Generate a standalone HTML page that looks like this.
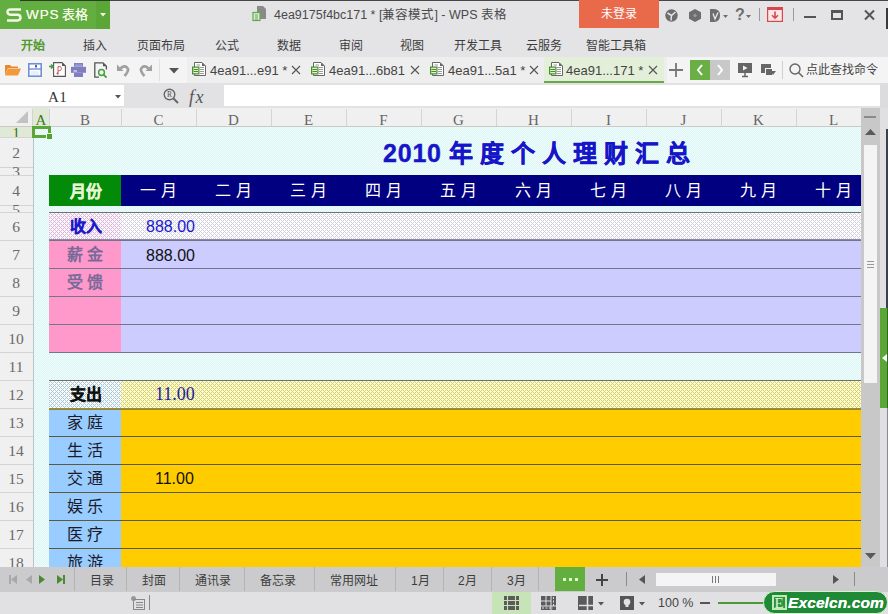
<!DOCTYPE html><html lang="zh-CN"><head><meta charset="utf-8"><style>
*{margin:0;padding:0;box-sizing:border-box}
html,body{width:888px;height:614px;overflow:hidden;background:#e3e3e5;font-family:"Liberation Sans",sans-serif;position:relative}
.a{position:absolute}
.t{position:absolute;white-space:nowrap;line-height:1}
svg{position:absolute;overflow:visible}
.mi{font-size:12px;color:#3c3c3c;top:40px}
.ch{position:absolute;font-family:"Liberation Serif",serif;font-size:15px;color:#666;top:112px;height:16px;line-height:16px;text-align:center}
.rh{position:absolute;font-family:"Liberation Serif",serif;font-size:14px;color:#6a6a6a;left:0;width:32px;text-align:center;line-height:1}
.tab{font-size:12px;color:#3c3c3c;top:575px}
</style></head><body>
<div class="a" style="left:0;top:0;width:888px;height:29px;background:#e4e4e6"></div>
<div class="a" style="left:0;top:0;width:110px;height:29px;background:#63ae40"></div>
<div class="a" style="left:96px;top:1px;width:14px;height:28px;background:#5aa637"></div>
<div class="a" style="left:20px;top:0;width:868px;height:1px;background:rgba(30,30,30,.8)"></div>
<svg style="left:6px;top:8px" width="16" height="14" viewBox="0 0 16 14"><path d="M15 1.5H4.5Q1.5 1.5 1.5 4T4.5 6.8H11.5Q14.5 6.8 14.5 9.6T11.5 12.5H1" fill="none" stroke="#f4f9e6" stroke-width="2.4"/></svg>
<div class="t" style="left:26px;top:8px;font-size:13.5px;color:#f4f9e6;text-shadow:0 0 0.4px #f4f9e6"><span style="letter-spacing:0.9px">WP</span>S<span style="font-size:13px;margin-left:3px">表格</span></div>
<svg style="left:100px;top:13px" width="6" height="4"><path d="M0 0H6L3 3.5Z" fill="#f4f9e6"/></svg>
<svg style="left:252px;top:6px" width="16" height="16" viewBox="0 0 16 16"><path d="M5 0H11L14 3V13H5Z" fill="#8a8a8a"/><rect x="1" y="6.5" width="7" height="8" fill="#e4e4e6" stroke="#5cae3c" stroke-width="1.2"/><path d="M3 9H6M3 11H6M3 13H6" stroke="#5cae3c" stroke-width="1"/></svg>
<div class="t" style="left:274px;top:9px;font-size:12.5px;color:#4a4a4a">4ea9175f4bc171 * [兼容模式] - WPS 表格</div>
<div class="a" style="left:579px;top:0;width:80px;height:28px;background:#e96a4b"></div>
<div class="t" style="left:601px;top:8px;font-size:12px;color:#fff">未登录</div>
<svg style="left:665px;top:9px" width="13" height="13" viewBox="0 0 13 13"><circle cx="6.5" cy="6.5" r="6.2" fill="#6d6d6d"/><path d="M2.5 4L6.5 6.5L10.5 3M6.5 6.5L6 11.5" stroke="#e4e4e6" stroke-width="1.5" fill="none"/></svg>
<svg style="left:689px;top:9px" width="12" height="13" viewBox="0 0 12 13"><path d="M6 0L12 3.2V9.8L6 13L0 9.8V3.2Z" fill="#6d6d6d"/><path d="M6 4.5L8 6.5L6 8.5L4 6.5Z" fill="#9a9a9a"/></svg>
<svg style="left:710px;top:9px" width="20" height="13" viewBox="0 0 20 13"><path d="M0 0H4Q10 0 10 6.5T4 13H0Z" fill="#6d6d6d"/><path d="M3 4.5L5 10L8 3.5" stroke="#e4e4e6" stroke-width="1.4" fill="none"/><path d="M13 6H18L15.5 9Z" fill="#6d6d6d"/></svg>
<div class="t" style="left:735px;top:7px;font-size:16px;font-weight:bold;color:#6d6d6d">?</div>
<svg style="left:746px;top:15px" width="6" height="4"><path d="M0 0H5L2.5 3Z" fill="#6d6d6d"/></svg>
<div class="a" style="left:759px;top:8px;width:1px;height:13px;background:#9a9a9a"></div>
<svg style="left:767px;top:7px" width="16" height="15" viewBox="0 0 16 15"><rect x="0.6" y="0.6" width="14.8" height="13.8" fill="#fbe7e7" stroke="#d9474a" stroke-width="1.2"/><rect x="0" y="0" width="16" height="3" fill="#d9474a"/><path d="M8 4.5V11M5 8.2L8 11.2L11 8.2" stroke="#d9474a" stroke-width="1.6" fill="none"/></svg>
<div class="a" style="left:793px;top:8px;width:1px;height:13px;background:#9a9a9a"></div>
<div class="a" style="left:804px;top:16px;width:12px;height:2px;background:#555"></div>
<div class="a" style="left:831px;top:10px;width:12px;height:10px;border:2px solid #555;border-top-width:3px"></div>
<svg style="left:864px;top:10px" width="11" height="10" viewBox="0 0 11 10"><path d="M1 0.5L10 9.5M10 0.5L1 9.5" stroke="#555" stroke-width="2"/></svg>
<div class="a" style="left:886px;top:8px;width:2px;height:21px;background:#3a3a3a"></div>
<div class="a" style="left:0;top:29px;width:888px;height:28px;background:#e4e4e6"></div>
<div class="t mi" style="left:21px;color:#4e9a2a;font-weight:bold">开始</div>
<div class="t mi" style="left:83px">插入</div>
<div class="t mi" style="left:137px">页面布局</div>
<div class="t mi" style="left:215px">公式</div>
<div class="t mi" style="left:277px">数据</div>
<div class="t mi" style="left:339px">审阅</div>
<div class="t mi" style="left:400px">视图</div>
<div class="t mi" style="left:454px">开发工具</div>
<div class="t mi" style="left:526px">云服务</div>
<div class="t mi" style="left:586px">智能工具箱</div>
<div class="a" style="left:0;top:57px;width:888px;height:26px;background:#f4f4f4"></div>
<div class="a" style="left:187px;top:57px;width:480px;height:26px;background:#eeeeee"></div>
<svg style="left:5px;top:64px" width="16" height="12" viewBox="0 0 16 12"><path d="M0 1H5L6.5 2.5H13V4H3L0 11Z" fill="#e9892f"/><path d="M3 4.5H16L13 11.5H0Z" fill="#f29a3a"/></svg>
<svg style="left:28px;top:63px" width="14" height="14" viewBox="0 0 14 14"><rect x="0.8" y="0.8" width="12.4" height="12.4" fill="#fff" stroke="#7090dc" stroke-width="1.6"/><path d="M1 6H13" stroke="#7090dc" stroke-width="1.4"/><rect x="7" y="2" width="2" height="2.5" fill="#4a62b0"/><path d="M3 9H11M3 11H11" stroke="#d6e0f6" stroke-width="1"/></svg>
<svg style="left:49px;top:62px" width="17" height="15" viewBox="0 0 17 15"><path d="M4.6 0.6H13L16.4 4V14.4H4.6Z" fill="#fff" stroke="#555" stroke-width="1.1"/><path d="M13 0.6V4H16.4Z" fill="#555"/><path d="M8.5 12.5Q7 10.5 8.5 10.5Q9.5 10.5 9 12.5M9 12V4.5Q12.5 4 12.5 6.5T9 9" stroke="#cc4a50" stroke-width="0.9" fill="none"/><path d="M0 4.5H3M2 2.5L4 4.5L2 6.5" stroke="#4a9a40" stroke-width="1.5" fill="none"/></svg>
<svg style="left:71px;top:63px" width="15" height="14" viewBox="0 0 15 14"><rect x="3" y="0" width="9" height="3.6" fill="#7e7ec0"/><path d="M4 1.3H11M4 2.5H11" stroke="#a8a8d8" stroke-width="0.6"/><rect x="0" y="3.8" width="15" height="6" fill="#7e7ec0"/><path d="M2.5 8H6" stroke="#fff" stroke-width="1"/><rect x="3" y="10" width="9" height="4" fill="#7e7ec0"/></svg>
<svg style="left:94px;top:62px" width="14" height="16" viewBox="0 0 14 16"><path d="M5 15.2H0.8V0.8H9L12.4 4.2V7.5" fill="none" stroke="#555" stroke-width="1.3"/><path d="M9 0.8V4.2H12.4Z" fill="#555"/><circle cx="7.5" cy="10.5" r="2.9" fill="none" stroke="#4aa040" stroke-width="1.5"/><path d="M9.6 12.6L12.6 15.6" stroke="#4aa040" stroke-width="1.8"/></svg>
<svg style="left:117px;top:63px" width="13" height="14" viewBox="0 0 13 14"><path d="M3.5 5.5Q7 2 10 4.5T7.5 13" stroke="#a0a0a0" stroke-width="2.6" fill="none"/><path d="M0 1.5V8H6.5Z" fill="#a0a0a0"/></svg>
<svg style="left:139px;top:63px" width="13" height="14" viewBox="0 0 13 14"><path d="M9.5 5.5Q6 2 3 4.5T5.5 13" stroke="#a0a0a0" stroke-width="2.6" fill="none"/><path d="M13 1.5V8H6.5Z" fill="#a0a0a0"/></svg>
<div class="a" style="left:159px;top:59px;width:1px;height:22px;background:#e0e0e0"></div>
<svg style="left:169px;top:68px" width="10" height="6"><path d="M0 0H10L5 5.5Z" fill="#555"/></svg>
<div class="a" style="left:544px;top:57px;width:120px;height:26px;background:#e3efd9"></div>
<div class="a" style="left:544px;top:81px;width:120px;height:2px;background:#6aa94a"></div>
<svg style="left:192px;top:62px" width="15" height="15" viewBox="0 0 15 15"><path d="M2.5 0.5H10L13.5 4V13.5H2.5Z" fill="#fff" stroke="#666" stroke-width="1"/><path d="M10 0.5V4H13.5Z" fill="#666"/><path d="M8 5.5H12M8 7.5H12M8 9.5H12M8 11.5H12M4.5 3H8" stroke="#999" stroke-width="1"/><rect x="0.6" y="5.1" width="6.3" height="6.8" fill="#e2f4cc" stroke="#4a8a30" stroke-width="1.2"/><path d="M1.5 7.5H6M1.5 9.5H6" stroke="#4a8a30" stroke-width="1.1"/></svg>
<div class="t" style="left:210px;top:64px;font-size:13px;color:#444">4ea91...e91 *</div>
<svg style="left:291px;top:65px" width="10" height="10" viewBox="0 0 10 10"><path d="M1 1L9 9M9 1L1 9" stroke="#555" stroke-width="1.1"/></svg>
<svg style="left:311px;top:62px" width="15" height="15" viewBox="0 0 15 15"><path d="M2.5 0.5H10L13.5 4V13.5H2.5Z" fill="#fff" stroke="#666" stroke-width="1"/><path d="M10 0.5V4H13.5Z" fill="#666"/><path d="M8 5.5H12M8 7.5H12M8 9.5H12M8 11.5H12M4.5 3H8" stroke="#999" stroke-width="1"/><rect x="0.6" y="5.1" width="6.3" height="6.8" fill="#e2f4cc" stroke="#4a8a30" stroke-width="1.2"/><path d="M1.5 7.5H6M1.5 9.5H6" stroke="#4a8a30" stroke-width="1.1"/></svg>
<div class="t" style="left:329px;top:64px;font-size:13px;color:#444">4ea91...6b81</div>
<svg style="left:410px;top:65px" width="10" height="10" viewBox="0 0 10 10"><path d="M1 1L9 9M9 1L1 9" stroke="#555" stroke-width="1.1"/></svg>
<svg style="left:430px;top:62px" width="15" height="15" viewBox="0 0 15 15"><path d="M2.5 0.5H10L13.5 4V13.5H2.5Z" fill="#fff" stroke="#666" stroke-width="1"/><path d="M10 0.5V4H13.5Z" fill="#666"/><path d="M8 5.5H12M8 7.5H12M8 9.5H12M8 11.5H12M4.5 3H8" stroke="#999" stroke-width="1"/><rect x="0.6" y="5.1" width="6.3" height="6.8" fill="#e2f4cc" stroke="#4a8a30" stroke-width="1.2"/><path d="M1.5 7.5H6M1.5 9.5H6" stroke="#4a8a30" stroke-width="1.1"/></svg>
<div class="t" style="left:448px;top:64px;font-size:13px;color:#444">4ea91...5a1 *</div>
<svg style="left:529px;top:65px" width="10" height="10" viewBox="0 0 10 10"><path d="M1 1L9 9M9 1L1 9" stroke="#555" stroke-width="1.1"/></svg>
<svg style="left:549px;top:62px" width="15" height="15" viewBox="0 0 15 15"><path d="M2.5 0.5H10L13.5 4V13.5H2.5Z" fill="#fff" stroke="#666" stroke-width="1"/><path d="M10 0.5V4H13.5Z" fill="#666"/><path d="M8 5.5H12M8 7.5H12M8 9.5H12M8 11.5H12M4.5 3H8" stroke="#999" stroke-width="1"/><rect x="0.6" y="5.1" width="6.3" height="6.8" fill="#e2f4cc" stroke="#4a8a30" stroke-width="1.2"/><path d="M1.5 7.5H6M1.5 9.5H6" stroke="#4a8a30" stroke-width="1.1"/></svg>
<div class="t" style="left:566px;top:64px;font-size:13px;color:#444">4ea91...171 *</div>
<svg style="left:648px;top:65px" width="10" height="10" viewBox="0 0 10 10"><path d="M1 1L9 9M9 1L1 9" stroke="#555" stroke-width="1.1"/></svg>
<svg style="left:669px;top:63px" width="14" height="14" viewBox="0 0 14 14"><path d="M7 0V14M0 7H14" stroke="#777" stroke-width="1.8"/></svg>
<div class="a" style="left:690px;top:60px;width:20px;height:20px;background:#6aaf45"></div>
<div class="a" style="left:710px;top:60px;width:20px;height:20px;background:#c8c8c8"></div>
<svg style="left:696px;top:64px" width="8" height="12" viewBox="0 0 8 12"><path d="M6 1L2 6L6 11" stroke="#fff" stroke-width="2" fill="none"/></svg>
<svg style="left:716px;top:64px" width="8" height="12" viewBox="0 0 8 12"><path d="M2 1L6 6L2 11" stroke="#fff" stroke-width="2" fill="none"/></svg>
<svg style="left:738px;top:63px" width="14" height="14" viewBox="0 0 14 14"><rect x="0" y="0" width="14" height="10" fill="#666"/><path d="M5 2.5V7.5L9.5 5Z" fill="#f4f4f4"/><path d="M7 10V13M4 13.5H10" stroke="#666" stroke-width="1.5"/></svg>
<svg style="left:761px;top:64px" width="15" height="13" viewBox="0 0 15 13"><path d="M0 0H10V4H4V9H0Z" fill="#666"/><rect x="5" y="5" width="6" height="6" fill="#666"/><path d="M9 7H15L12 11Z" fill="#666"/></svg>
<div class="a" style="left:782px;top:61px;width:1px;height:18px;background:#d0d0d0"></div>
<svg style="left:789px;top:63px" width="15" height="15" viewBox="0 0 15 15"><circle cx="6" cy="6" r="5" fill="none" stroke="#666" stroke-width="1.4"/><path d="M9.5 9.5L14 14" stroke="#666" stroke-width="1.6"/></svg>
<div class="t" style="left:806px;top:64px;font-size:12px;color:#444">点此查找命令</div>
<div class="a" style="left:0;top:83px;width:888px;height:25px;background:#e2e2e4"></div>
<div class="a" style="left:0;top:85px;width:124px;height:21px;background:#fff"></div>
<div class="t" style="left:48px;top:90px;font-family:'Liberation Serif',serif;font-size:15px;letter-spacing:0.5px;color:#333">A1</div>
<svg style="left:115px;top:95px" width="6" height="4"><path d="M0 0H6L3 3.5Z" fill="#555"/></svg>
<svg style="left:163px;top:88px" width="16" height="16" viewBox="0 0 16 16"><circle cx="6.5" cy="6.5" r="5.3" fill="none" stroke="#666" stroke-width="1.4"/><path d="M10.5 10.5L15 15" stroke="#666" stroke-width="2"/><text x="6.5" y="9.2" font-size="7.5" text-anchor="middle" fill="#555" font-family="Liberation Serif">R</text></svg>
<div class="t" style="left:189px;top:88px;font-family:'Liberation Serif',serif;font-style:italic;font-size:18px;letter-spacing:1.5px;color:#555">fx</div>
<div class="a" style="left:224px;top:85px;width:656px;height:21px;background:#fff"></div>
<div class="a" style="left:880px;top:83px;width:8px;height:484px;background:#dcdcde"></div>
<div class="a" style="left:0;top:108px;width:861px;height:19px;background:#f0f0f0"></div>
<div class="a" style="left:0;top:126px;width:861px;height:1px;background:#c9c9c9"></div>
<svg style="left:15px;top:110px" width="15" height="14"><path d="M13 1V13H1Z" fill="#c2c2c2"/></svg>
<div class="a" style="left:32px;top:108px;width:17px;height:19px;background:#dfe9d6"></div>
<div class="a" style="left:49px;top:109px;width:1px;height:17px;background:#d4d4d4"></div>
<div class="ch" style="left:33px;width:16px;color:#3a7a20">A</div>
<div class="a" style="left:121px;top:109px;width:1px;height:17px;background:#d4d4d4"></div>
<div class="ch" style="left:49px;width:72px">B</div>
<div class="a" style="left:196px;top:109px;width:1px;height:17px;background:#d4d4d4"></div>
<div class="ch" style="left:121px;width:75px">C</div>
<div class="a" style="left:271px;top:109px;width:1px;height:17px;background:#d4d4d4"></div>
<div class="ch" style="left:196px;width:75px">D</div>
<div class="a" style="left:346px;top:109px;width:1px;height:17px;background:#d4d4d4"></div>
<div class="ch" style="left:271px;width:75px">E</div>
<div class="a" style="left:421px;top:109px;width:1px;height:17px;background:#d4d4d4"></div>
<div class="ch" style="left:346px;width:75px">F</div>
<div class="a" style="left:496px;top:109px;width:1px;height:17px;background:#d4d4d4"></div>
<div class="ch" style="left:421px;width:75px">G</div>
<div class="a" style="left:571px;top:109px;width:1px;height:17px;background:#d4d4d4"></div>
<div class="ch" style="left:496px;width:75px">H</div>
<div class="a" style="left:646px;top:109px;width:1px;height:17px;background:#d4d4d4"></div>
<div class="ch" style="left:571px;width:75px">I</div>
<div class="a" style="left:721px;top:109px;width:1px;height:17px;background:#d4d4d4"></div>
<div class="ch" style="left:646px;width:75px">J</div>
<div class="a" style="left:796px;top:109px;width:1px;height:17px;background:#d4d4d4"></div>
<div class="ch" style="left:721px;width:75px">K</div>
<div class="a" style="left:871px;top:109px;width:1px;height:17px;background:#d4d4d4"></div>
<div class="ch" style="left:796px;width:75px">L</div>
<div class="a" style="left:32px;top:109px;width:1px;height:17px;background:#d4d4d4"></div>
<div class="a" style="left:0;top:127px;width:34px;height:440px;background:#f0f0f0"></div>
<div class="a" style="left:33px;top:127px;width:1px;height:440px;background:#b8c4c8"></div>
<div class="a" style="left:0;top:127px;width:32px;height:10px;background:#dfe9d6"></div>
<div class="a" style="left:0;top:137px;width:33px;height:1px;background:#d4d4d4"></div>
<div class="a rh" style="top:127px;height:10px;overflow:hidden"><div style="position:absolute;left:0;width:32px;top:-1.8px;font-size:15.5px;line-height:15.5px;color:#3a7a20">1</div></div>
<div class="a" style="left:0;top:167px;width:33px;height:1px;background:#d4d4d4"></div>
<div class="a rh" style="top:137px;height:30px;overflow:hidden"><div style="position:absolute;left:0;width:32px;top:8.2px;font-size:15.5px;line-height:15.5px">2</div></div>
<div class="a" style="left:0;top:175px;width:33px;height:1px;background:#d4d4d4"></div>
<div class="a rh" style="top:167px;height:8px;overflow:hidden"><div style="position:absolute;left:0;width:32px;top:-2.8px;font-size:15.5px;line-height:15.5px">3</div></div>
<div class="a" style="left:0;top:205px;width:33px;height:1px;background:#d4d4d4"></div>
<div class="a rh" style="top:175px;height:30px;overflow:hidden"><div style="position:absolute;left:0;width:32px;top:8.2px;font-size:15.5px;line-height:15.5px">4</div></div>
<div class="a" style="left:0;top:212px;width:33px;height:1px;background:#d4d4d4"></div>
<div class="a rh" style="top:205px;height:7px;overflow:hidden"><div style="position:absolute;left:0;width:32px;top:-3.3px;font-size:15.5px;line-height:15.5px">5</div></div>
<div class="a" style="left:0;top:240px;width:33px;height:1px;background:#d4d4d4"></div>
<div class="a rh" style="top:212px;height:28px;overflow:hidden"><div style="position:absolute;left:0;width:32px;top:7.2px;font-size:15.5px;line-height:15.5px">6</div></div>
<div class="a" style="left:0;top:268px;width:33px;height:1px;background:#d4d4d4"></div>
<div class="a rh" style="top:240px;height:28px;overflow:hidden"><div style="position:absolute;left:0;width:32px;top:7.2px;font-size:15.5px;line-height:15.5px">7</div></div>
<div class="a" style="left:0;top:296px;width:33px;height:1px;background:#d4d4d4"></div>
<div class="a rh" style="top:268px;height:28px;overflow:hidden"><div style="position:absolute;left:0;width:32px;top:7.2px;font-size:15.5px;line-height:15.5px">8</div></div>
<div class="a" style="left:0;top:324px;width:33px;height:1px;background:#d4d4d4"></div>
<div class="a rh" style="top:296px;height:28px;overflow:hidden"><div style="position:absolute;left:0;width:32px;top:7.2px;font-size:15.5px;line-height:15.5px">9</div></div>
<div class="a" style="left:0;top:352px;width:33px;height:1px;background:#d4d4d4"></div>
<div class="a rh" style="top:324px;height:28px;overflow:hidden"><div style="position:absolute;left:0;width:32px;top:7.2px;font-size:15.5px;line-height:15.5px">10</div></div>
<div class="a" style="left:0;top:380px;width:33px;height:1px;background:#d4d4d4"></div>
<div class="a rh" style="top:352px;height:28px;overflow:hidden"><div style="position:absolute;left:0;width:32px;top:7.2px;font-size:15.5px;line-height:15.5px">11</div></div>
<div class="a" style="left:0;top:408px;width:33px;height:1px;background:#d4d4d4"></div>
<div class="a rh" style="top:380px;height:28px;overflow:hidden"><div style="position:absolute;left:0;width:32px;top:7.2px;font-size:15.5px;line-height:15.5px">12</div></div>
<div class="a" style="left:0;top:436px;width:33px;height:1px;background:#d4d4d4"></div>
<div class="a rh" style="top:408px;height:28px;overflow:hidden"><div style="position:absolute;left:0;width:32px;top:7.2px;font-size:15.5px;line-height:15.5px">13</div></div>
<div class="a" style="left:0;top:464px;width:33px;height:1px;background:#d4d4d4"></div>
<div class="a rh" style="top:436px;height:28px;overflow:hidden"><div style="position:absolute;left:0;width:32px;top:7.2px;font-size:15.5px;line-height:15.5px">14</div></div>
<div class="a" style="left:0;top:492px;width:33px;height:1px;background:#d4d4d4"></div>
<div class="a rh" style="top:464px;height:28px;overflow:hidden"><div style="position:absolute;left:0;width:32px;top:7.2px;font-size:15.5px;line-height:15.5px">15</div></div>
<div class="a" style="left:0;top:520px;width:33px;height:1px;background:#d4d4d4"></div>
<div class="a rh" style="top:492px;height:28px;overflow:hidden"><div style="position:absolute;left:0;width:32px;top:7.2px;font-size:15.5px;line-height:15.5px">16</div></div>
<div class="a" style="left:0;top:548px;width:33px;height:1px;background:#d4d4d4"></div>
<div class="a rh" style="top:520px;height:28px;overflow:hidden"><div style="position:absolute;left:0;width:32px;top:7.2px;font-size:15.5px;line-height:15.5px">17</div></div>
<div class="a" style="left:0;top:576px;width:33px;height:1px;background:#d4d4d4"></div>
<div class="a rh" style="top:548px;height:28px;overflow:hidden"><div style="position:absolute;left:0;width:32px;top:7.2px;font-size:15.5px;line-height:15.5px">18</div></div>
<svg style="left:34px;top:127px" width="827" height="440"><defs><pattern id="bgp" width="2" height="2" patternUnits="userSpaceOnUse"><rect width="2" height="2" fill="#edfefe"/><rect width="1" height="1" fill="#e0f4f4"/><rect x="1" y="1" width="1" height="1" fill="#e0f4f4"/></pattern></defs><rect width="827" height="440" fill="url(#bgp)"/></svg>
<div class="a" style="left:49px;top:175px;width:72px;height:31px;background:#028a08"></div>
<div class="a" style="left:121px;top:175px;width:740px;height:31px;background:#000080"></div>
<div class="t" style="left:70px;top:184px;font-size:16px;font-weight:bold;color:#e6f6d2;-webkit-text-stroke:0.4px #e6f6d2">月份</div>
<div class="t" style="left:121px;width:75px;text-align:center;top:183px;font-size:16px;color:#fff">一 月</div>
<div class="t" style="left:196px;width:75px;text-align:center;top:183px;font-size:16px;color:#fff">二 月</div>
<div class="t" style="left:271px;width:75px;text-align:center;top:183px;font-size:16px;color:#fff">三 月</div>
<div class="t" style="left:346px;width:75px;text-align:center;top:183px;font-size:16px;color:#fff">四 月</div>
<div class="t" style="left:421px;width:75px;text-align:center;top:183px;font-size:16px;color:#fff">五 月</div>
<div class="t" style="left:496px;width:75px;text-align:center;top:183px;font-size:16px;color:#fff">六 月</div>
<div class="t" style="left:571px;width:75px;text-align:center;top:183px;font-size:16px;color:#fff">七 月</div>
<div class="t" style="left:646px;width:75px;text-align:center;top:183px;font-size:16px;color:#fff">八 月</div>
<div class="t" style="left:721px;width:75px;text-align:center;top:183px;font-size:16px;color:#fff">九 月</div>
<div class="t" style="left:796px;width:75px;text-align:center;top:183px;font-size:16px;color:#fff">十 月</div>
<div class="t" style="left:383px;top:141px;font-size:25px;font-weight:bold;color:#1616c8;-webkit-text-stroke:0.4px #1616c8"><span style="letter-spacing:0.8px">2010</span><span style="font-size:24px;letter-spacing:0.2px"> 年 度 个 人 理 财 汇 总</span></div>
<svg style="left:49px;top:212px" width="72" height="28"><defs><pattern id="hp1" width="4" height="4" patternUnits="userSpaceOnUse"><rect width="4" height="4" fill="#fff6fd"/><path d="M0 0h1v1h-1zM2 0h1v1h-1zM1 1h1v1h-1zM0 2h1v1h-1zM2 2h1v1h-1zM3 3h1v1h-1z" fill="#d8b8d8"/></pattern></defs><rect width="72" height="28" fill="url(#hp1)"/></svg>
<svg style="left:121px;top:212px" width="740" height="28"><defs><pattern id="hp2" width="4" height="4" patternUnits="userSpaceOnUse"><rect width="4" height="4" fill="#ffffff"/><path d="M0 0h1v1h-1zM2 0h1v1h-1zM1 1h1v1h-1zM0 2h1v1h-1zM2 2h1v1h-1zM3 3h1v1h-1z" fill="#d0d0e2"/></pattern></defs><rect width="740" height="28" fill="url(#hp2)"/></svg>
<div class="a" style="left:49px;top:240px;width:72px;height:112px;background:#ff99cc"></div>
<div class="a" style="left:121px;top:240px;width:740px;height:112px;background:#ccccff"></div>
<svg style="left:49px;top:380px" width="72" height="28"><defs><pattern id="hp3" width="4" height="4" patternUnits="userSpaceOnUse"><rect width="4" height="4" fill="#f6ffff"/><path d="M0 0h1v1h-1zM2 0h1v1h-1zM1 1h1v1h-1zM0 2h1v1h-1zM2 2h1v1h-1zM3 3h1v1h-1z" fill="#b0c4d4"/></pattern></defs><rect width="72" height="28" fill="url(#hp3)"/></svg>
<svg style="left:121px;top:380px" width="740" height="28"><defs><pattern id="hp4" width="4" height="4" patternUnits="userSpaceOnUse"><rect width="4" height="4" fill="#ffffcc"/><path d="M0 0h1v1h-1zM2 0h1v1h-1zM1 1h1v1h-1zM0 2h1v1h-1zM2 2h1v1h-1zM3 3h1v1h-1z" fill="#d6cc78"/></pattern></defs><rect width="740" height="28" fill="url(#hp4)"/></svg>
<div class="a" style="left:49px;top:408px;width:72px;height:168px;background:#99ccff"></div>
<div class="a" style="left:121px;top:408px;width:740px;height:168px;background:#ffcc00"></div>
<div class="a" style="left:49px;top:212px;width:812px;height:1px;background:#707070"></div>
<div class="a" style="left:49px;top:380px;width:812px;height:1px;background:#707070"></div>
<div class="a" style="left:49px;top:240px;width:812px;height:1px;background:#74748c"></div>
<div class="a" style="left:49px;top:268px;width:812px;height:1px;background:#74748c"></div>
<div class="a" style="left:49px;top:296px;width:812px;height:1px;background:#74748c"></div>
<div class="a" style="left:49px;top:324px;width:812px;height:1px;background:#74748c"></div>
<div class="a" style="left:49px;top:352px;width:812px;height:1px;background:#74748c"></div>
<div class="a" style="left:49px;top:239px;width:812px;height:1px;background:#8a8aa0"></div>
<div class="a" style="left:49px;top:408px;width:812px;height:1px;background:#8c8a68"></div>
<div class="a" style="left:49px;top:409px;width:812px;height:1px;background:#a88800"></div>
<div class="a" style="left:49px;top:436px;width:812px;height:1px;background:#5a5a40"></div>
<div class="a" style="left:49px;top:464px;width:812px;height:1px;background:#5a5a40"></div>
<div class="a" style="left:49px;top:492px;width:812px;height:1px;background:#5a5a40"></div>
<div class="a" style="left:49px;top:520px;width:812px;height:1px;background:#5a5a40"></div>
<div class="a" style="left:49px;top:548px;width:812px;height:1px;background:#5a5a40"></div>
<div class="t" style="left:70px;top:219px;font-size:16px;font-weight:bold;color:#1a1acc;-webkit-text-stroke:0.3px #1a1acc">收入</div>
<div class="t" style="left:146px;top:219px;font-size:16px;color:#1a1acc">888.00</div>
<div class="t" style="left:67px;top:247px;font-size:16px;font-weight:bold;color:#7a6a9a">薪 金</div>
<div class="t" style="left:146px;top:248px;font-size:16px;color:#111">888.00</div>
<div class="t" style="left:67px;top:275px;font-size:16px;font-weight:bold;color:#7a6a9a">受 馈</div>
<div class="t" style="left:70px;top:387px;font-size:16px;font-weight:bold;color:#111;-webkit-text-stroke:0.3px #111">支出</div>
<div class="t" style="left:155px;top:385px;font-family:'Liberation Serif',serif;font-size:18px;color:#2020a0">11.00</div>
<div class="t" style="left:67px;top:415px;font-size:16px;color:#1a1a2a">家 庭</div>
<div class="t" style="left:67px;top:443px;font-size:16px;color:#1a1a2a">生 活</div>
<div class="t" style="left:67px;top:471px;font-size:16px;color:#1a1a2a">交 通</div>
<div class="t" style="left:67px;top:499px;font-size:16px;color:#1a1a2a">娱 乐</div>
<div class="t" style="left:67px;top:527px;font-size:16px;color:#1a1a2a">医 疗</div>
<div class="t" style="left:67px;top:555px;font-size:16px;color:#1a1a2a">旅 游</div>
<div class="t" style="left:155px;top:471px;font-size:16px;color:#111">11.00</div>
<div class="a" style="left:32px;top:126px;width:19px;height:12px;border:3px solid #5aa637"></div>
<div class="a" style="left:46px;top:133px;width:6px;height:6px;background:#52a032;border-left:1px solid #e8ffe0;border-top:1px solid #e8ffe0"></div>
<div class="a" style="left:861px;top:108px;width:19px;height:459px;background:#c8c8c8"></div>
<div class="a" style="left:864px;top:145px;width:13px;height:238px;background:#f4f4f4"></div>
<div class="a" style="left:864px;top:116px;width:12px;height:2px;background:#8a8a8a"></div>
<svg style="left:865px;top:129px" width="11" height="6"><path d="M0 6H11L5.5 0Z" fill="#5a5a5a"/></svg>
<svg style="left:865px;top:553px" width="11" height="6"><path d="M0 0H11L5.5 6Z" fill="#5a5a5a"/></svg>
<div class="a" style="left:867px;top:261px;width:7px;height:1px;background:#999"></div>
<div class="a" style="left:867px;top:264px;width:7px;height:1px;background:#999"></div>
<div class="a" style="left:867px;top:267px;width:7px;height:1px;background:#999"></div>
<div class="a" style="left:880px;top:108px;width:8px;height:459px;background:#e0e0e2"></div>
<div class="a" style="left:886px;top:129px;width:2px;height:179px;background:#3a4048"></div>
<div class="a" style="left:887px;top:408px;width:1px;height:159px;background:#8a8a90"></div>
<div class="a" style="left:880px;top:308px;width:8px;height:100px;background:#5aa637"></div>
<div class="a" style="left:887px;top:308px;width:1px;height:100px;background:#2e6a20"></div>
<svg style="left:882px;top:354px" width="5" height="8"><path d="M5 0V8L0 4Z" fill="#fff"/></svg>
<div class="a" style="left:0px;top:567px;width:888px;height:25px;background:#cbcbcd"></div>
<div class="a" style="left:9px;top:575px;width:2px;height:9px;background:#a8a8a8"></div>
<svg style="left:11px;top:575px" width="6" height="9"><path d="M6 0V9L0 4.5Z" fill="#a8a8a8"/></svg>
<svg style="left:26px;top:575px" width="6" height="9"><path d="M6 0V9L0 4.5Z" fill="#a8a8a8"/></svg>
<svg style="left:39px;top:575px" width="6" height="9"><path d="M0 0V9L6 4.5Z" fill="#4a8a30"/></svg>
<svg style="left:57px;top:575px" width="6" height="9"><path d="M0 0V9L6 4.5Z" fill="#4a8a30"/></svg>
<div class="a" style="left:63px;top:575px;width:2px;height:9px;background:#4a8a30"></div>
<div class="a" style="left:74px;top:567px;width:1px;height:24px;background:#b4b4b6"></div>
<div class="a" style="left:126px;top:567px;width:1px;height:24px;background:#b4b4b6"></div>
<div class="a" style="left:179px;top:567px;width:1px;height:24px;background:#b4b4b6"></div>
<div class="a" style="left:244px;top:567px;width:1px;height:24px;background:#b4b4b6"></div>
<div class="a" style="left:314px;top:567px;width:1px;height:24px;background:#b4b4b6"></div>
<div class="a" style="left:395px;top:567px;width:1px;height:24px;background:#b4b4b6"></div>
<div class="a" style="left:443px;top:567px;width:1px;height:24px;background:#b4b4b6"></div>
<div class="a" style="left:491px;top:567px;width:1px;height:24px;background:#b4b4b6"></div>
<div class="a" style="left:538px;top:567px;width:1px;height:24px;background:#b4b4b6"></div>
<div class="t tab" style="left:90px">目录</div>
<div class="t tab" style="left:142px">封面</div>
<div class="t tab" style="left:195px">通讯录</div>
<div class="t tab" style="left:260px">备忘录</div>
<div class="t tab" style="left:330px">常用网址</div>
<div class="t tab" style="left:411px">1月</div>
<div class="t tab" style="left:458px">2月</div>
<div class="t tab" style="left:507px">3月</div>
<div class="a" style="left:555px;top:567px;width:30px;height:24px;background:#62ae3f"></div>
<div class="a" style="left:563px;top:578px;width:3px;height:3px;background:#e2f8d2"></div>
<div class="a" style="left:569px;top:578px;width:3px;height:3px;background:#e2f8d2"></div>
<div class="a" style="left:575px;top:578px;width:3px;height:3px;background:#e2f8d2"></div>
<svg style="left:595px;top:573px" width="14" height="14" viewBox="0 0 14 14"><path d="M7 1V13M1 7H13" stroke="#444" stroke-width="2"/></svg>
<div class="a" style="left:626px;top:572px;width:1px;height:14px;background:#8a8a8a"></div>
<svg style="left:639px;top:575px" width="6" height="9"><path d="M6 0V9L0 4.5Z" fill="#555"/></svg>
<div class="a" style="left:656px;top:573px;width:120px;height:13px;background:#f4f4f4"></div>
<div class="a" style="left:712px;top:576px;width:1px;height:7px;background:#777"></div>
<div class="a" style="left:715px;top:576px;width:1px;height:7px;background:#777"></div>
<div class="a" style="left:718px;top:576px;width:1px;height:7px;background:#777"></div>
<svg style="left:833px;top:575px" width="6" height="9"><path d="M0 0V9L6 4.5Z" fill="#555"/></svg>
<div class="a" style="left:854px;top:572px;width:1px;height:14px;background:#8a8a8a"></div>
<div class="a" style="left:0px;top:592px;width:888px;height:22px;background:#e1e1e3"></div>
<svg style="left:131px;top:596px" width="14" height="14" viewBox="0 0 14 14"><circle cx="2.5" cy="2.5" r="2.5" fill="#999"/><rect x="2.5" y="3.5" width="11" height="10" fill="none" stroke="#888" stroke-width="1"/><path d="M5 6.5H12M5 9H12M5 11.5H12" stroke="#888" stroke-width="1"/></svg>
<div class="a" style="left:149px;top:595px;width:1px;height:15px;background:#888"></div>
<div class="a" style="left:492px;top:592px;width:39px;height:22px;background:#c7e3b8"></div>
<svg style="left:504px;top:596px" width="15" height="14" viewBox="0 0 15 14"><rect width="15" height="14" fill="#5a5a5a"/><path d="M0 4.5H15M0 9.5H15M3.5 0V14M11.5 0V14" stroke="#c7e3b8" stroke-width="1.1"/></svg>
<svg style="left:541px;top:596px" width="15" height="14" viewBox="0 0 15 14"><rect width="15" height="14" fill="#5a5a5a"/><path d="M0 5H10M5 0V10M0 10H15M10 0V14" stroke="#e1e1e3" stroke-width="1"/><path d="M12.5 1V10M1 12H12" stroke="#e1e1e3" stroke-width="1" stroke-dasharray="2 1.5"/></svg>
<svg style="left:578px;top:596px" width="15" height="14" viewBox="0 0 15 14"><rect width="15" height="14" fill="#5a5a5a"/><path d="M9.5 0V14M1 9.5H15" stroke="#e1e1e3" stroke-width="1.6"/></svg>
<svg style="left:598px;top:602px" width="6" height="4"><path d="M0 0H6L3 3.5Z" fill="#555"/></svg>
<svg style="left:620px;top:596px" width="14" height="14" viewBox="0 0 14 14"><rect x="0" y="0" width="14" height="14" fill="#555"/><circle cx="7" cy="6" r="3.3" fill="#e1e1e3"/><rect x="5.5" y="9" width="3" height="2" fill="#e1e1e3"/></svg>
<svg style="left:639px;top:602px" width="6" height="4"><path d="M0 0H6L3 3.5Z" fill="#555"/></svg>
<div class="t" style="left:658px;top:597px;font-size:12.5px;color:#444">100 %</div>
<div class="a" style="left:700px;top:602px;width:10px;height:2px;background:#555"></div>
<div class="a" style="left:718px;top:602px;width:50px;height:2px;background:#4a9a3a"></div>
<div class="a" style="left:763px;top:591px;width:125px;height:23px;border-radius:12px;background:#1f8a36;border:1px solid #d8f0d0"></div>
<div class="a" style="left:772px;top:595px;width:15px;height:15px;border:2px solid #c4e8b4;background:#2a9440"></div>
<div class="t" style="left:774.5px;top:596px;font-family:'Liberation Serif',serif;font-size:15px;color:#e0f6d6">E</div>
<div class="t" style="left:788px;top:595px;font-size:15.5px;font-weight:bold;font-style:italic;color:#fff;letter-spacing:0.1px;text-shadow:0 0 0.5px #fff">Excelcn.com</div>
</body></html>
